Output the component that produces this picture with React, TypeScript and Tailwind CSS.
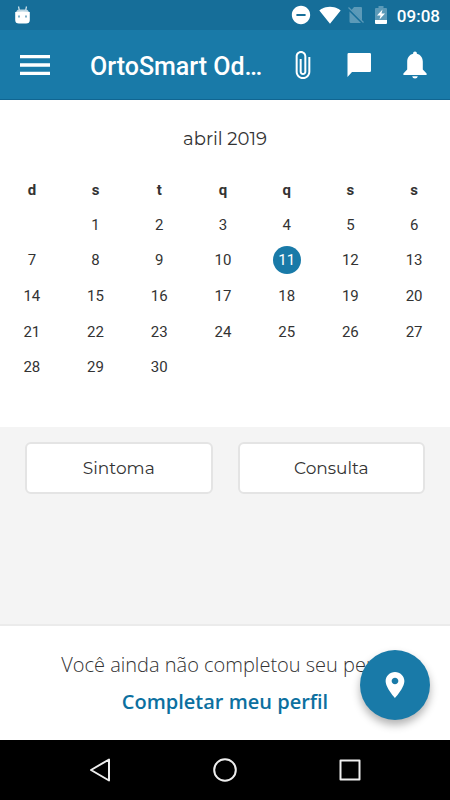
import { IoMdAttach, IoMdMenu, IoMdPin } from 'react-icons/io'
import { MdDoNotDisturbOn, MdSignalWifi4Bar } from 'react-icons/md'

const weekdays = ['d', 's', 't', 'q', 'q', 's', 's']
const today = 11
const daysInMonth = 30
const firstWeekday = 1

const weeks = Array.from({ length: 5 }, (_, week) =>
  weekdays.map((_, i) => {
    const day = week * 7 + i - firstWeekday + 1
    return day >= 1 && day <= daysInMonth ? day : null
  })
)

function StatusBar() {
  return (
    <div className="flex h-[30px] items-center justify-between bg-[#166e99] pl-[15px] pr-[10px] text-white">
      <svg width="15" height="18" viewBox="0 0 15 18" fill="none">
        <path d="M3.5 0.5 4.5 5M11.5 0.5 10.5 5" stroke="#d5e5ed" strokeWidth="1.2" />
        <path d="M1 7Q1.5 3.5 4 3.5H11Q13.5 3.5 14 7Z" fill="#b9d4e1" />
        <path d="M0.2 6Q7.5 5 14.8 6V14Q14.8 17.5 11 17.5H4Q0.2 17.5 0.2 14Z" fill="#fff" />
        <path d="M3 9.5H5V11.5H3ZM10 9.5H12V11.5H10Z" fill="#7fb0c8" />
      </svg>
      <div className="flex items-center">
        <MdDoNotDisturbOn size={22} />
        <MdSignalWifi4Bar size={22} className="ml-[7px]" />
        <svg width="16" height="18" viewBox="0 0 16 18" className="ml-[7px]">
          <path d="M6 1H13Q14 1 14 2V14.5L3.5 4ZM1.5 5.5 13 17H3Q1.5 17 1.5 15.5Z" fill="#5c9ab8" />
          <path d="M0.5 1.5 15.5 16.5" stroke="#5c9ab8" strokeWidth="1.3" />
        </svg>
        <svg width="12" height="18" viewBox="0 0 12 18" className="ml-[11px]">
          <path d="M3.5 0H8.5V2H11Q12 2 12 3V14H0V3Q0 2 1 2H3.5Z" fill="#5c9ab8" />
          <path d="M0 14H12V17Q12 18 11 18H1Q0 18 0 17Z" fill="#fff" />
          <path d="M7.5 3.5 2 9.5H5.5L4.5 13.5 10 7.5H6.5Z" fill="#fff" />
        </svg>
        <span className="ml-[10px] pt-[2px] text-[17px] leading-[20px] font-medium">09:08</span>
      </div>
    </div>
  )
}

function Header() {
  return (
    <header className="flex h-[70px] items-center border-b border-[#106591] bg-[#197aa8] pl-[15px] pr-[15px] text-white">
      <button aria-label="Menu">
        <IoMdMenu size={40} />
      </button>
      <h1 className="ml-[35px] flex-1 pt-1 text-[25px] leading-[32px] font-medium whitespace-nowrap">
        OrtoSmart Od…
      </h1>
      <div className="flex items-center gap-[16px]">
        <button aria-label="Anexos" className="flex w-10 justify-center">
          <IoMdAttach size={32} />
        </button>
        <button aria-label="Mensagens" className="flex w-10 justify-center">
          <svg width="24" height="24" viewBox="0 0 24 24" fill="currentColor">
            <path d="M1.7 0H22.8Q24 0 24 1.2V17.8Q24 19 22.8 19H5L0.5 24V1.2Q0.5 0 1.7 0Z" />
          </svg>
        </button>
        <button aria-label="Notificações" className="flex w-10 justify-center">
          <svg width="24" height="28" viewBox="0 0 24 28" fill="currentColor">
            <path d="M12 0.5C13.200 0.5 13.900 1.400 13.900 2.700C17.800 3.700 19.800 6.800 19.800 10.500V18.500L23.600 22.500V24H0.400V22.500L4.200 18.500V10.500C4.200 6.800 6.200 3.700 10.100 2.700C10.100 1.400 10.800 0.5 12 0.5Z" />
            <path d="M9.200 25.200H14.800Q14.400 27.600 12 27.600T9.200 25.200Z" />
          </svg>
        </button>
      </div>
    </header>
  )
}

function Calendar() {
  return (
    <section className="bg-white pt-[24px] pr-1 pb-[42px] text-[#333]">
      <h2 className="mb-[18px] pl-1 text-center font-['Montserrat','Inter',sans-serif] text-[18px] leading-[30px]">
        abril 2019
      </h2>
      <table className="h-[213px] w-full table-fixed text-center text-[15px] leading-[28px]">
        <thead>
          <tr>
            {weekdays.map((name, i) => (
              <th key={i} className="h-[35px] p-0 font-bold">{name}</th>
            ))}
          </tr>
        </thead>
        <tbody>
          {weeks.map((week, i) => (
            <tr key={i}>
              {week.map((day, j) => (
                <td key={j} className="h-[35px] p-0">
                  {day === today ? (
                    <span className="mx-auto block size-[28px] rounded-full bg-[#197aa8] text-white">
                      {day}
                    </span>
                  ) : (
                    day
                  )}
                </td>
              ))}
            </tr>
          ))}
        </tbody>
      </table>
    </section>
  )
}

function ActionButton({ label }: { label: string }) {
  return (
    <button className="h-[52px] flex-1 rounded-md border-2 border-[#e4e4e4] bg-white pt-px font-['Montserrat','Inter',sans-serif] text-[17px] text-[#333]">
      {label}
    </button>
  )
}

function ProfileNotice() {
  return (
    <footer className="relative border-t-2 border-[#ebebeb] bg-white pt-[22px] pb-[22px] text-center font-['Open_Sans',sans-serif] text-[20px]">
      <p className="leading-[34px] font-light text-[#333]">Você ainda não completou seu perfil</p>
      <a href="#perfil" className="block pt-[4px] leading-[32px] font-semibold text-[#0c70a0]">
        Completar meu perfil
      </a>
      <button
        aria-label="Localização"
        className="absolute right-5 bottom-5 flex size-[70px] items-center justify-center rounded-full bg-[#197aa8] text-white shadow-[0_5px_9px_rgba(0,0,0,0.3)]"
      >
        <IoMdPin size={30} />
      </button>
    </footer>
  )
}

function NavigationBar() {
  return (
    <nav className="flex h-[60px] items-center justify-center gap-[95px] bg-black">
      <button aria-label="Voltar">
        <svg width="30" height="30" viewBox="0 0 30 30" fill="none" stroke="#eee" strokeWidth="2" strokeLinejoin="round">
          <path d="M24 4.5V25.5L6 15Z" />
        </svg>
      </button>
      <button aria-label="Início">
        <svg width="30" height="30" viewBox="0 0 30 30" fill="none" stroke="#eee" strokeWidth="2">
          <circle cx="15" cy="15" r="10.8" />
        </svg>
      </button>
      <button aria-label="Recentes">
        <svg width="30" height="30" viewBox="0 0 30 30" fill="none" stroke="#eee" strokeWidth="2" strokeLinejoin="round">
          <path d="M5.500 5.500H24.500V24.500H5.500Z" />
        </svg>
      </button>
    </nav>
  )
}

export default function App() {
  return (
    <div className="flex min-h-screen flex-col bg-[#f4f4f4] font-['Roboto',sans-serif]">
      <StatusBar />
      <Header />
      <main className="flex-1">
        <Calendar />
        <div className="flex gap-[25px] px-[25px] pt-[15px]">
          <ActionButton label="Sintoma" />
          <ActionButton label="Consulta" />
        </div>
      </main>
      <ProfileNotice />
      <NavigationBar />
    </div>
  )
}
